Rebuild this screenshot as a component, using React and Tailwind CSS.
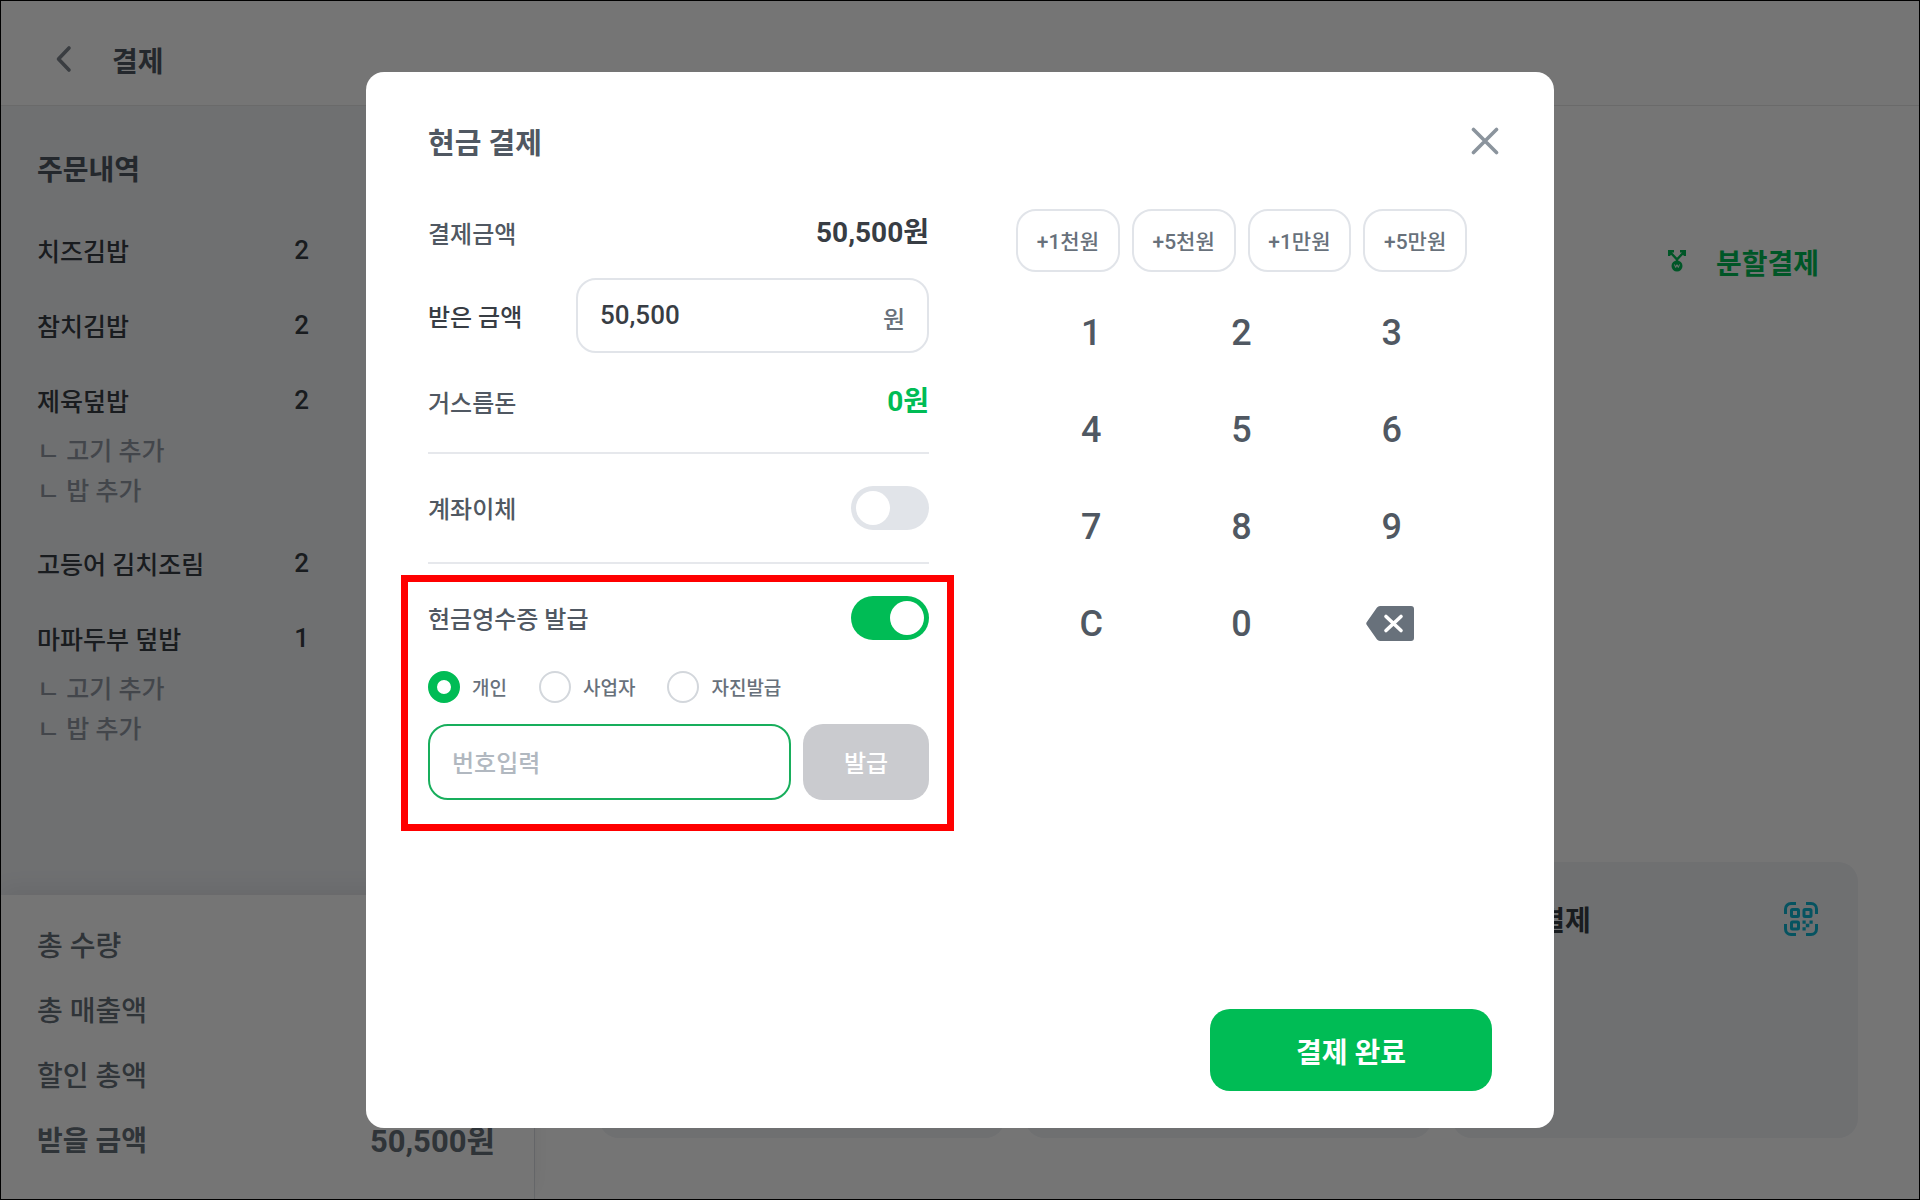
import React, { useState } from "react";

const orders = [
  { name: "치즈김밥", count: 2, options: [] },
  { name: "참치김밥", count: 2, options: [] },
  { name: "제육덮밥", count: 2, options: ["고기 추가", "밥 추가"] },
  { name: "고등어 김치조림", count: 2, options: [] },
  { name: "마파두부 덮밥", count: 1, options: ["고기 추가", "밥 추가"] },
]

const quickAmounts = [
  { label: "+1천원", value: 1000 },
  { label: "+5천원", value: 5000 },
  { label: "+1만원", value: 10000 },
  { label: "+5만원", value: 50000 },
]

const keys = ["1", "2", "3", "4", "5", "6", "7", "8", "9", "C", "0", "back"]
const receiptTypes = ["개인", "사업자", "자진발급"]
const total = 50500

function SplitIcon() {
  return (
    <svg className="mb-2 w-[18px] h-[22px]" viewBox="0 0 18 22" fill="none" aria-hidden="true">
      <path d="M9 12V9.500L2.500 2.500M9 9.500L15.500 2.500M1.200 6V1.200H6M12 1.200H16.800V6" stroke="#00bc55" strokeWidth="2.400" />
      <circle cx="9" cy="16" r="5.500" fill="#00bc55" />
      <path d="M6.500 14.500L7.700 17.500L9 14.700L10.300 17.500L11.500 14.500" stroke="#fff" strokeWidth="1" />
    </svg>
  )
}

function QrIcon() {
  return (
    <svg className="w-[34px] h-[34px]" viewBox="0 0 34 34" fill="none" stroke="#0fb5d2" aria-hidden="true">
      <path d="M1.500 12V7a5.500 5.500 0 0 1 5.500-5.500H12M22 1.500H27a5.500 5.500 0 0 1 5.500 5.500V12M32.500 22V27a5.500 5.500 0 0 1-5.500 5.500H22M12 32.500H7A5.500 5.500 0 0 1 1.500 27V22" strokeWidth="3" />
      <rect x="7.500" y="7.500" width="7" height="7" rx="1" strokeWidth="3" />
      <rect x="20" y="7.500" width="7" height="7" rx="1" strokeWidth="3" />
      <rect x="7.500" y="20" width="7" height="7" rx="1" strokeWidth="3" />
      <path d="M18.500 18.500h3.200v3.200h-3.200zM25.500 18.500h3.200v3.200h-3.200zM21.800 21.800h3.500v3.500h-3.500zM18.500 25.300h3.200v3.200h-3.200z" fill="#0fb5d2" stroke="none" />
    </svg>
  )
}

function BackspaceIcon() {
  return (
    <svg className="mr-1 w-12 h-[35px]" viewBox="0 0 48 35" fill="none" aria-hidden="true">
      <path d="M14 0H45a3 3 0 0 1 3 3V32a3 3 0 0 1-3 3H14a4 4 0 0 1-3-1.500L.8 19a2.500 2.500 0 0 1 0-3L11 1.500A4 4 0 0 1 14 0Z" fill="#68717b" />
      <path d="M20 10.500L35 24.500M35 10.500L20 24.500" stroke="#fff" strokeWidth="3.600" strokeLinecap="round" />
    </svg>
  )
}

function Toggle({ id, checked, onChange }) {
  return (
    <input id={ id } type="checkbox" role="switch"
      className="appearance-none flex w-[78px] h-11 p-[5px] rounded-full bg-[#e1e4e9] checked:bg-[#00bc55] before:block before:h-[34px] before:w-[34px] before:rounded-full before:bg-white checked:before:ml-auto"
      checked={ checked }
      onChange={ (e) => onChange(e.target.checked) }
    />
  )
}

function OrderPage() {
  return (
    <div className="flex min-h-screen flex-col border border-black bg-white">
      <header className="flex h-[105px] items-center border-b border-[#e8e8e8] pl-[54px] pt-5">
        <button type="button" aria-label="뒤로" className="mb-2 mr-[39px]">
          <svg className="w-[18px] h-7" viewBox="0 0 18 28" fill="none" stroke="#7e858e" strokeWidth="3.600" strokeLinecap="round" strokeLinejoin="round">
            <path d="M14 3L3.500 14L14 25" />
          </svg>
        </button>
        <h1 className="text-[28px] leading-10 font-bold text-[#505862]">결제</h1>
      </header>
      <div className="flex flex-1">
        <aside className="flex w-[534px] shrink-0 flex-col border-r border-[#e1e4e9] bg-[#f1f3f7]">
          <div className="flex-1 pl-9 pt-[45px]">
            <h2 className="text-[28px] leading-10 font-bold text-[#505862]">주문내역</h2>
            <ul className="mt-[41px] flex flex-col gap-[33px]">
              { orders.map((order) => (
                <li key={ order.name }>
                  <div className="flex w-[272px] items-start justify-between text-[25px] leading-[42px] font-medium text-[#383d44]">
                    <span>{ order.name }</span>
                    <span className="text-[26px] leading-9">{ order.count }</span>
                  </div>
                  { order.options.length > 0 && (
                    <ul className="mt-2 text-[25px] leading-10 font-medium text-[#929aa4]">
                      { order.options.map((option) => (<li key={ option }>ㄴ { option }</li>))}
                    </ul>
                  )}
                </li>
              ))}
            </ul>
          </div>
          <dl className="flex flex-col gap-[25px] bg-white pl-9 pr-[39px] pt-8 pb-[37px] text-[28px] leading-10 font-medium text-[#68717b] shadow-[0_-8px_20px_rgba(0,0,0,0.06)]">
            <dt>총 수량</dt>
            <dt>총 매출액</dt>
            <dt>할인 총액</dt>
            <div className="flex justify-between font-bold">
              <dt>받을 금액</dt>
              <dd className="text-[31px]">50,500원</dd>
            </div>
          </dl>
        </aside>
        <main className="flex flex-1 flex-col justify-between pl-16 pr-[61px] pt-[139px] pb-[61px]">
          <button type="button" className="mr-[39px] flex items-center gap-[30px] self-end text-[28px] leading-10 font-bold text-[#00bc55]">
            <SplitIcon />
            분할결제
          </button>
          <div className="grid grid-cols-3 gap-5">
            <div className="h-[276px] rounded-[20px] bg-[#f1f3f7]"></div>
            <div className="h-[276px] rounded-[20px] bg-[#f1f3f7]"></div>
            <div className="flex h-[276px] items-start justify-between rounded-[20px] bg-[#f1f3f7] pl-9 pr-10 pt-10">
              <span className="text-[28px] leading-10 font-bold text-[#383d44]">간편결제</span>
              <QrIcon />
            </div>
          </div>
        </main>
      </div>
    </div>
  )
}

function CashModal() {
  const [received, setReceived] = useState(total)
  const [transfer, setTransfer] = useState(false)
  const [receipt, setReceipt] = useState(true)
  const [receiptType, setReceiptType] = useState("개인")
  const [number, setNumber] = useState("")

  const pressKey = function(key) {
    if (key === "C") {
      setReceived(0)
    } else if (key === "back") {
      setReceived(Math.floor(received / 10))
    } else {
      setReceived(received * 10 + parseInt(key))
    }
  }

  const handleInput = function(event) {
    setReceived(parseInt(event.target.value.replace(/\D/g, "")) || 0)
  }

  return (
    <div className="fixed inset-0 flex items-center justify-center bg-black/54">
      <div role="dialog" aria-labelledby="cash-title" className="flex min-h-[88vh] w-full max-w-[1188px] flex-col rounded-[18px] bg-white px-[62px] pt-12 pb-[37px] text-[24px] font-medium text-[#505862]">
        <div className="flex items-start justify-between">
          <h2 id="cash-title" className="text-[29px] leading-12 font-bold">현금 결제</h2>
          <button type="button" aria-label="닫기" className="-mr-[7px] mt-[7px]">
            <svg className="w-7 h-7" viewBox="0 0 28 28" stroke="#8b949d" strokeWidth="3.600" strokeLinecap="round">
              <path d="M2.500 2.500L25.500 25.500M25.500 2.500L2.500 25.500" />
            </svg>
          </button>
        </div>
        <div className="mt-[41px] flex flex-1 items-start gap-[87px]">
          <div className="flex-1">
            <div className="flex h-12 items-center justify-between">
              <span className="pt-1">결제금액</span>
              <strong className="text-[28px] font-bold text-[#383d44]">50,500원</strong>
            </div>
            <div className="mt-[21px] flex items-center justify-between">
              <label htmlFor="received" className="pt-1 text-[#383d44]">받은 금액</label>
              <div className="flex h-[75px] w-[353px] items-center rounded-[20px] border-2 border-[#e1e4e9] px-[22px]">
                <input id="received" className="min-w-0 flex-1 text-[26px] text-[#383d44] outline-none"
                  value={ received.toLocaleString("en-US") }
                  onChange={ handleInput }
                />
                <span className="pt-2 text-[#68717b]">원</span>
              </div>
            </div>
            <div className="mt-[25px] flex h-12 items-center justify-between">
              <span className="pt-1">거스름돈</span>
              <strong className="text-[28px] font-bold text-[#00bc55]">{ Math.max(received - total, 0).toLocaleString("en-US") }원</strong>
            </div>
            <hr className="mt-[26px] border-t-2 border-[#e6e8ec]" />
            <div className="my-8 flex h-11 items-center justify-between">
              <label htmlFor="transfer" className="pt-1">계좌이체</label>
              <Toggle id="transfer" checked={ transfer } onChange={ setTransfer } />
            </div>
            <hr className="border-t-2 border-[#e6e8ec]" />
            <section className="relative mt-8">
              {/* highlight frame */}
              <div className="pointer-events-none absolute -top-[21px] -right-[25px] -bottom-[31px] -left-[27px] border-[7px] border-[#ff0000]"></div>
              <div className="flex h-11 items-center justify-between">
                <label htmlFor="receipt" className="pt-1">현금영수증 발급</label>
                <Toggle id="receipt" checked={ receipt } onChange={ setReceipt } />
              </div>
              <div className="mt-[31px] flex h-8 gap-8 text-[19px] leading-7 text-[#68717b]">
                { receiptTypes.map((type) => (
                  <label key={ type } className="flex items-center gap-3">
                    <input type="radio" name="receipt-type"
                      className="h-8 w-8 appearance-none rounded-full border-2 border-[#d3d7dc] checked:border-9 checked:border-[#00bc55]"
                      checked={ receiptType === type }
                      onChange={ () => setReceiptType(type) }
                    />
                    <span className="pt-1">{ type }</span>
                  </label>
                ))}
              </div>
              <div className="mt-[21px] flex gap-3">
                <input aria-label="번호입력" placeholder="번호입력"
                  className="h-[76px] min-w-0 flex-1 rounded-[20px] border-2 border-[#18ae5c] px-[22px] pt-1 outline-none placeholder:text-[#b1b8c0]"
                  value={ number }
                  onChange={ (e) => setNumber(e.target.value) }
                />
                <button type="button" className="h-[76px] w-[126px] rounded-[20px] bg-[#cacbcf] pt-1 text-white">발급</button>
              </div>
            </section>
          </div>
          <div className="mr-[25px] w-[451px]">
            <div className="grid grid-cols-4 gap-3">
              { quickAmounts.map((quick) => (
                <button key={ quick.label } type="button"
                  className="h-[63px] rounded-[20px] border-2 border-[#e1e4e9] pt-1 text-[21px] text-[#68717b]"
                  onClick={ () => setReceived(received + quick.value) }
                >
                  { quick.label }
                </button>
              ))}
            </div>
            <div className="mt-3 grid grid-cols-3">
              { keys.map((key) => (
                <button key={ key } type="button" aria-label={ key === "back" ? "지우기" : key }
                  className="flex h-[97px] items-center justify-center text-[36px]"
                  onClick={ () => pressKey(key) }
                >
                  { key === "back" ? <BackspaceIcon /> : key }
                </button>
              ))}
            </div>
          </div>
        </div>
        <button type="button" className="h-[82px] w-[282px] self-end rounded-[20px] bg-[#00bc55] pt-2 text-[28px] font-bold text-white">
          결제 완료
        </button>
      </div>
    </div>
  )
}

export default function App() {
  return (
    <div className="font-['Roboto','Noto_Sans_CJK_KR',sans-serif]">
      <OrderPage />
      <CashModal />
    </div>
  )
}
